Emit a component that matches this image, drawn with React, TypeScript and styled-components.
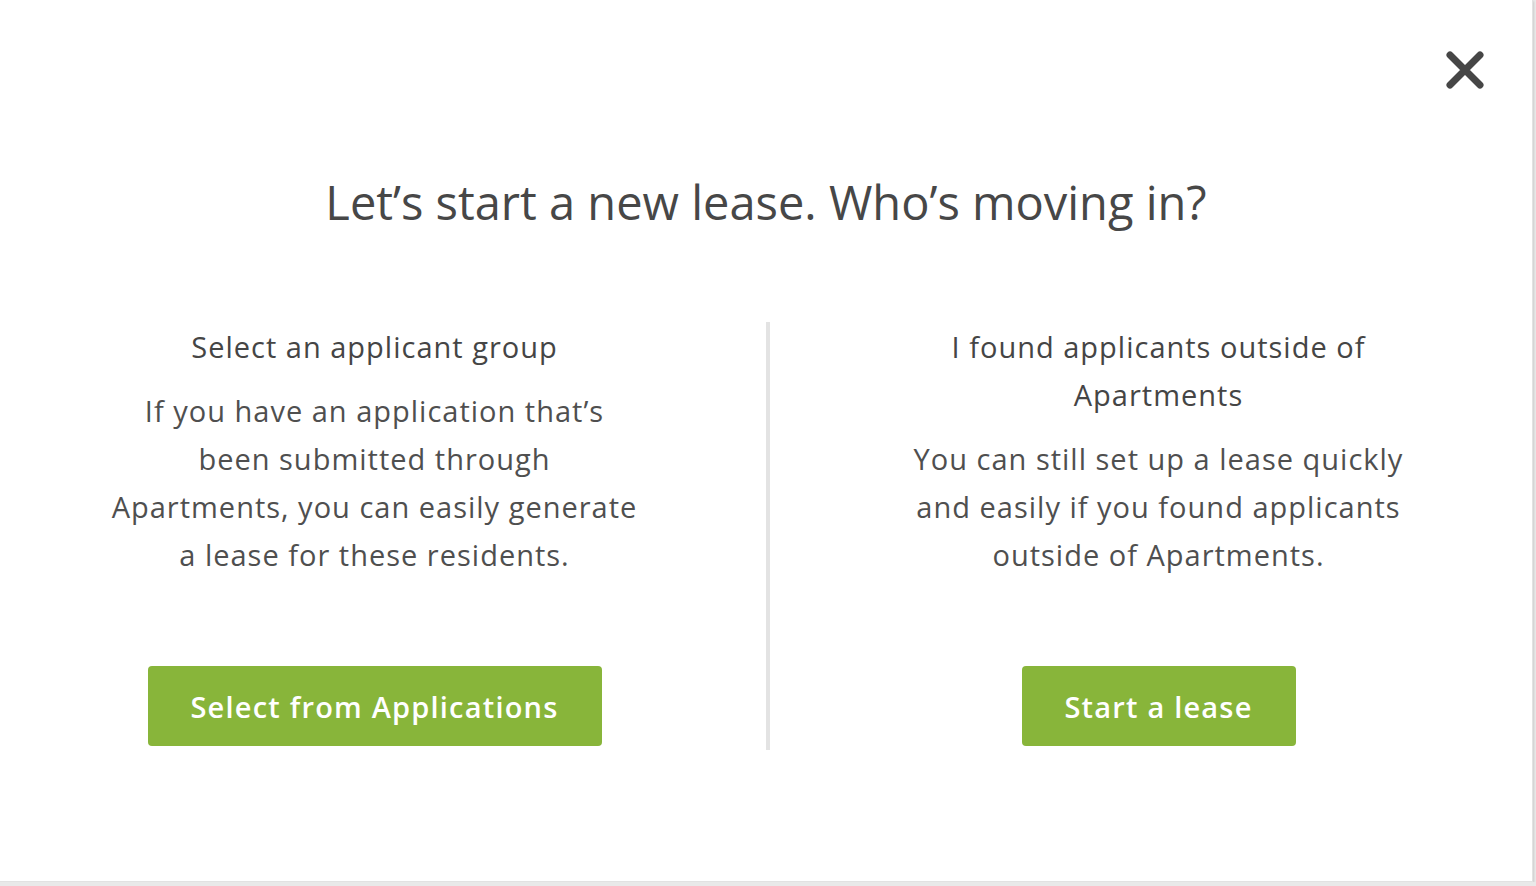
import React from "react";
import styled, { createGlobalStyle } from "styled-components";

const Global = createGlobalStyle`
  html, body { margin: 0; padding: 0; background: #e9e9e9; }
  body { font-family: "Open Sans", "Noto Sans", sans-serif; -webkit-font-smoothing: antialiased; }
  * { box-sizing: border-box; }
`;

const Modal = styled.div`
  position: relative;
  width: 1533px;
  height: 882px;
  background: #ffffff;
  box-shadow: 1px 1px 2px rgba(0, 0, 0, 0.12);
  border-right: 1px solid #e2e2e2;
  border-bottom: 1px solid #e2e2e2;
  display: flex;
  flex-direction: column;
  align-items: stretch;
  padding-top: 170px;
`;

const CloseButton = styled.button`
  position: absolute;
  top: 47px;
  right: 45px;
  width: 45px;
  height: 45px;
  padding: 0;
  border: none;
  background: transparent;
  cursor: pointer;
  display: flex;
  align-items: center;
  justify-content: center;
`;

const Title = styled.h1`
  margin: 0;
  text-align: center;
  font-size: 47px;
  line-height: 64px;
  font-weight: 400;
  color: #474747;
  letter-spacing: 0px;
`;

const Columns = styled.div`
  margin-top: 88px;
  display: grid;
  grid-template-columns: 766px 4px 1fr;
`;

const Column = styled.div<{ $side: "left" | "right" }>`
  display: flex;
  flex-direction: column;
  align-items: center;
  text-align: center;
  padding: 1px ${(p) => (p.$side === "left" ? "17px" : "0")} 4px
    ${(p) => (p.$side === "left" ? "0" : "15px")};
`;

const Divider = styled.div`
  background: #e3e3e3;
`;

const Heading = styled.h2`
  margin: 0;
  font-size: 29px;
  line-height: 48px;
  font-weight: 400;
  color: #454545;
  letter-spacing: 1px;
`;

const Body = styled.p`
  margin: 16px 0 87px;
  font-size: 29px;
  line-height: 48px;
  font-weight: 400;
  color: #4f4f4f;
  letter-spacing: 1px;
`;

const Button = styled.button<{ $width: number }>`
  margin-top: auto;
  width: ${(p) => p.$width}px;
  height: 80px;
  border: none;
  border-radius: 4px;
  background: #88b53a;
  color: #ffffff;
  font-family: "Open Sans", "Noto Sans", sans-serif;
  font-size: 29px;
  font-weight: 600;
  letter-spacing: 1.2px;
  cursor: pointer;
`;

export default function App() {
  return (
    <>
      <Global />
      <Modal>
        <CloseButton aria-label="Close">
          <svg width="40" height="40" viewBox="0 0 40 40">
            <path
              d="M5 5 L35 35 M35 5 L5 35"
              stroke="#464646"
              strokeWidth="7"
              strokeLinecap="round"
            />
          </svg>
        </CloseButton>
        <Title>Let’s start a new lease. Who’s moving in?</Title>
        <Columns>
          <Column $side="left">
            <Heading>Select an applicant group</Heading>
            <Body>
              If you have an application that’s
              <br />
              been submitted through
              <br />
              Apartments, you can easily generate
              <br />a lease for these residents.
            </Body>
            <Button $width={454}>Select from Applications</Button>
          </Column>
          <Divider />
          <Column $side="right">
            <Heading>
              I found applicants outside of
              <br />
              Apartments
            </Heading>
            <Body>
              You can still set up a lease quickly
              <br />
              and easily if you found applicants
              <br />
              outside of Apartments.
            </Body>
            <Button $width={274}>Start a lease</Button>
          </Column>
        </Columns>
      </Modal>
    </>
  );
}
